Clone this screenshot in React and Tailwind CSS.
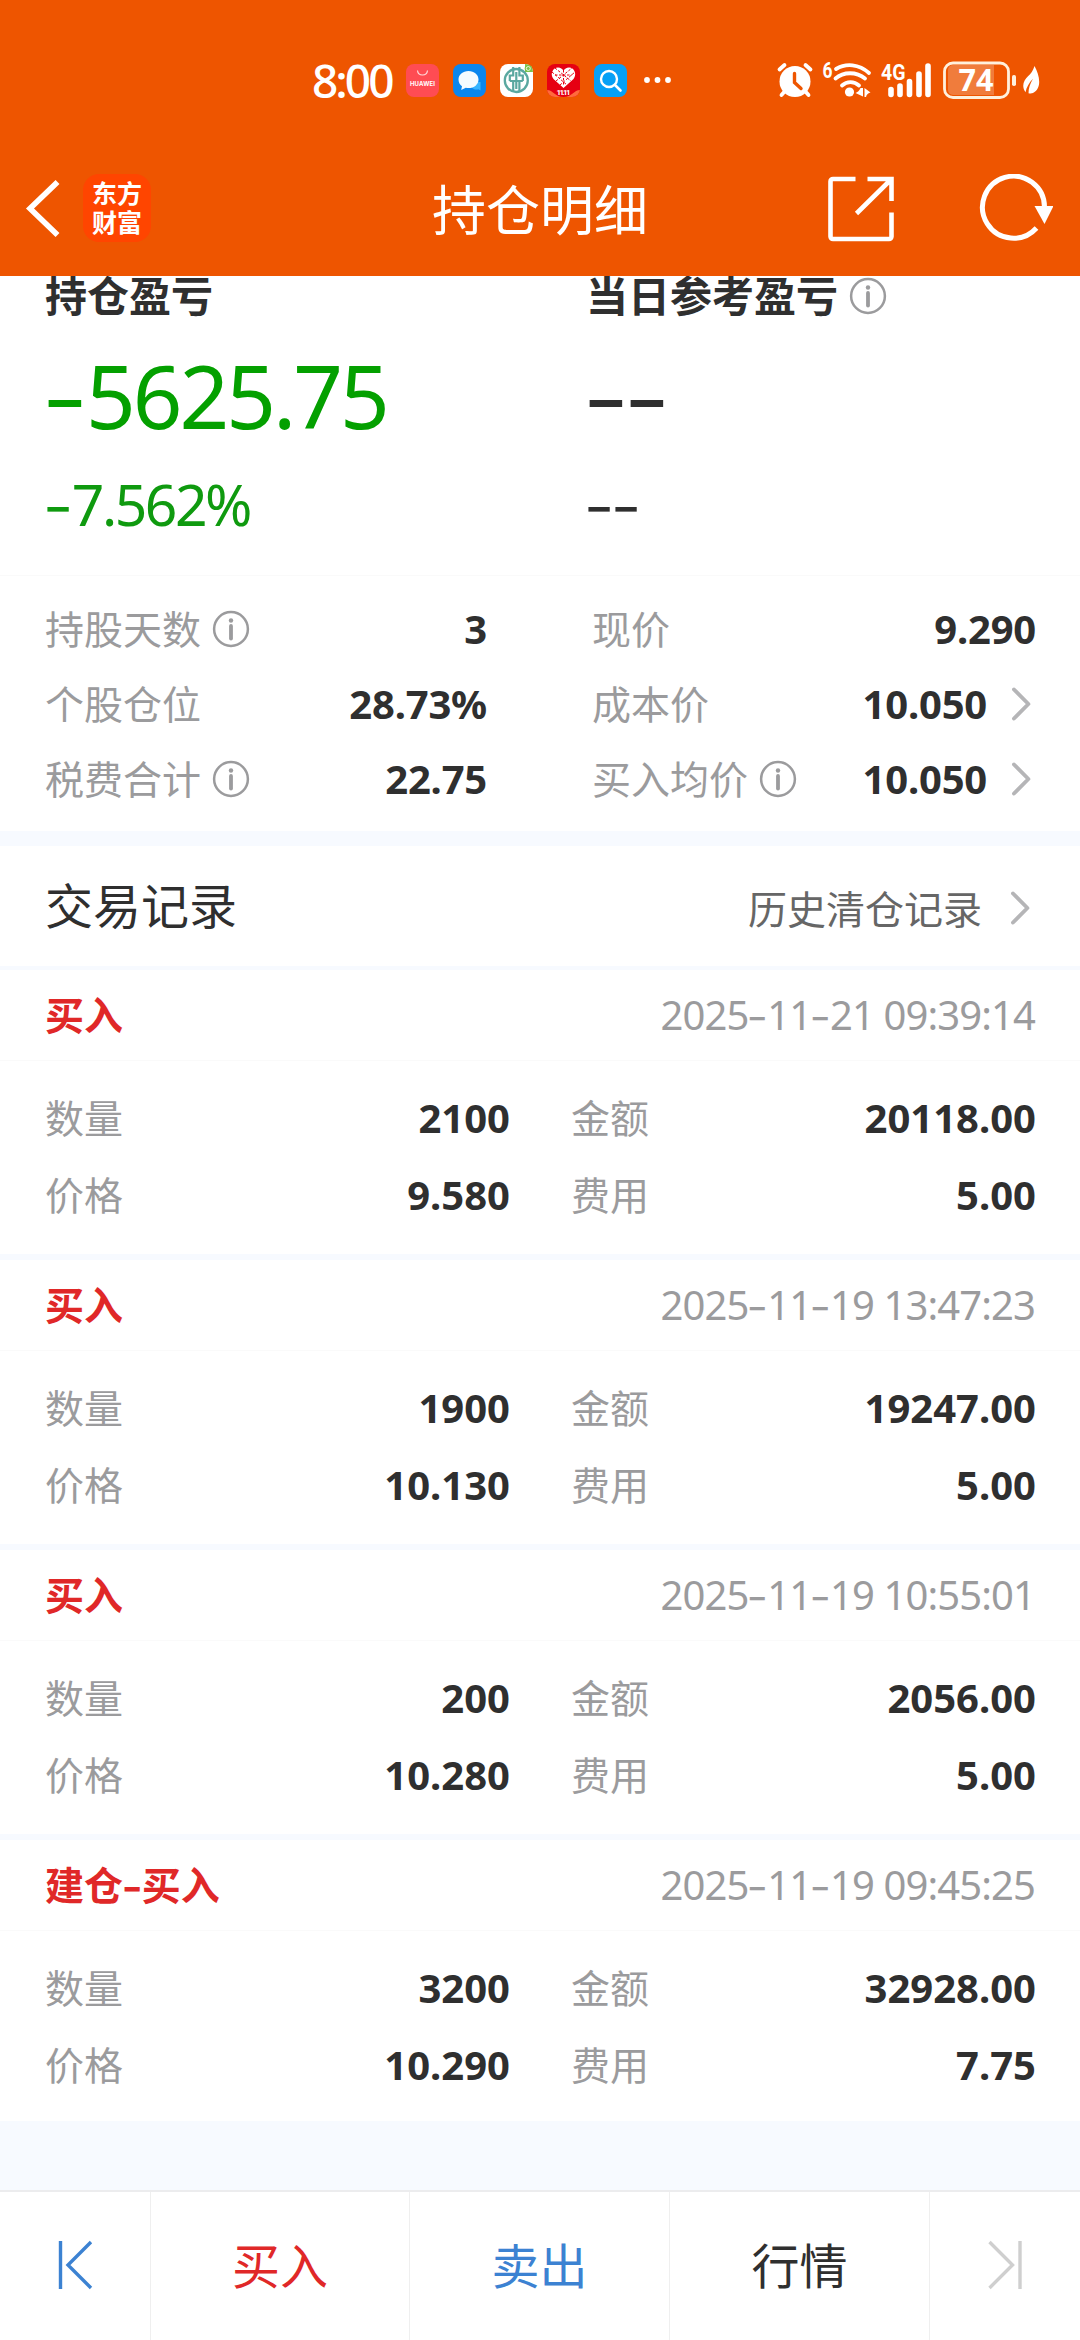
const CJK = "font-['Noto_Sans','Noto_Sans_CJK_SC',sans-serif]";

/* Numbers are set in Noto Sans; dashes use the wider Inter hyphen. */
function Num({ children }) {
  return children.split(/(-)/).filter(Boolean).map((part, i) =>
    part === "-" ? (
      <span key={i} className="inline-block translate-y-[0.02em] scale-x-[1.17] tracking-[0.01em] font-['Inter',sans-serif]">-</span>
    ) : (
      <span key={i}>{part}</span>
    )
  );
}

function InfoIcon() {
  return (
    <svg className="size-[38px] shrink-0" viewBox="0 0 38 38" fill="none">
      <circle cx="19" cy="19" r="16.900" stroke="#9b9b9d" strokeWidth="2.500" />
      <circle cx="19" cy="10.500" r="2.200" fill="#9b9b9d" />
      <path d="M19 16v12.500" stroke="#9b9b9d" strokeWidth="3.800" strokeLinecap="round" />
    </svg>
  );
}

function Chevron() {
  return (
    <svg className="h-[36px] w-[22px] shrink-0" viewBox="0 0 22 36" fill="none">
      <path d="M4 3.500 18.400 18 4 32.500" stroke="#b5b5b7" strokeWidth="3.900" strokeLinecap="round" strokeLinejoin="round" />
    </svg>
  );
}

function StatusBar() {
  return (
    <div className="flex h-[160px] items-center text-white">
      <div className="ml-[312px] w-[85px] text-[46px] leading-none font-medium tracking-[-3px] whitespace-nowrap font-['Noto_Sans',sans-serif]">8:00</div>
      <div className="ml-[9px] flex items-center gap-[14px]">
        <svg className="size-[33px]" viewBox="0 0 33 33">
          <rect width="33" height="33" rx="8" fill="#ff4c53" />
          <path d="M11.500 6.500c.6 6 9.400 6 10 0" fill="none" stroke="#ffd9da" strokeWidth="1.200" />
          <text x="16.500" y="21.500" textAnchor="middle" fontSize="6" fontWeight="700" fill="#fff" fontFamily="Inter, sans-serif" textLength="25">HUAWEI</text>
        </svg>
        <svg className="size-[33px]" viewBox="0 0 33 33">
          <rect width="33" height="33" rx="8" fill="#0a86ee" />
          <path d="M20 18h7.500v8.500l-2-1.200c-3 .8-6-.3-7-2.300z" fill="#36b4ff" />
          <path d="M15.500 7C9.800 7 5.500 10.600 5.500 15.500c0 3 1.400 5.300 3.500 6.800l-.8 3.700 4.600-2.200c.9.200 1.800.3 2.700.3 5.700 0 10-3.700 10-8.600S21.200 7 15.500 7z" fill="#f4fbff" />
        </svg>
        <svg className="size-[33px]" viewBox="0 0 33 33">
          <rect width="33" height="33" rx="8" fill="#fff" />
          <path d="M25 0a8 8 0 0 1 8 8H25z" fill="#7cc24a" />
          <circle cx="28.300" cy="4.500" r="3.600" fill="#7cc24a" />
          <circle cx="28.300" cy="4.500" r="2" fill="none" stroke="#fff" strokeWidth=".8" />
          <circle cx="16.300" cy="16.500" r="11.500" fill="none" stroke="#5aa8a0" strokeWidth="2.300" />
          <path d="M13.200 3v8.500h-3.400V17M19.400 3v8.500h3.400V17M9.800 17h13M13.200 17v10M19.400 17v10M16.300 8v17" fill="none" stroke="#5aa8a0" strokeWidth="2.200" />
        </svg>
        <svg className="size-[33px]" viewBox="0 0 33 33">
          <clipPath id="heartTile"><rect width="33" height="33" rx="8" /></clipPath>
          <g clipPath="url(#heartTile)">
            <rect width="33" height="33" fill="#e60012" />
            <path d="M0 26c6 0 8 7 16.500 7S27 26 33 26v7H0z" fill="#ff6a3c" />
            <path d="M16.500 24 6.500 15C2.500 10 6 3.500 11 3.500c2.500 0 4.500 1.500 5.500 3 1-1.500 3-3 5.500-3 5 0 8.500 6.500 4.500 11.500z" fill="#fff" />
            <path d="m5 8 15 13M8 4l16 13M13 21 28 8M9 17 25 4M16.500 6v16M8 11h17" stroke="#e60012" strokeWidth="1" strokeDasharray="2.500 1.500" />
            <text x="16.500" y="31" textAnchor="middle" fontSize="8" fontWeight="700" fill="#fff" fontFamily="Roboto, sans-serif" textLength="14">11.11</text>
          </g>
        </svg>
        <svg className="size-[33px]" viewBox="0 0 33 33" fill="none">
          <rect width="33" height="33" rx="8" fill="#06a0f6" />
          <circle cx="15" cy="15" r="8" stroke="#fff" strokeWidth="2.400" />
          <path d="m21 21 5.500 5.500" stroke="#fff" strokeWidth="2.600" strokeLinecap="round" />
        </svg>
      </div>
      <svg className="ml-[16px] h-[8px] w-[30px]" viewBox="0 0 30 8" fill="#fff">
        <circle cx="4" cy="4" r="2.900" />
        <circle cx="14.500" cy="4" r="2.900" />
        <circle cx="25" cy="4" r="2.900" />
      </svg>
      <svg className="mr-[40px] ml-auto h-[40px] w-[264px]" viewBox="0 0 264 40" fill="none">
        {/* alarm clock */}
        <g stroke="#fff" strokeLinecap="round">
          <circle cx="19" cy="21.500" r="15.500" fill="#fff" stroke="none" />
          <path d="M3.500 9.500 8.500 5M34.500 9.500l-5-4.500" strokeWidth="3.800" />
          <path d="m9 31-3.500 4M29 31l3.500 4" strokeWidth="3.800" />
          <path d="M18.500 13.500v9l6.500 6" stroke="#ee5500" strokeWidth="3.400" />
        </g>
        {/* wifi */}
        <text x="46.500" y="18" fontSize="22" fontWeight="700" fill="#fff" fontFamily="Roboto, sans-serif" textLength="10" lengthAdjust="spacingAndGlyphs">6</text>
        <g stroke="#fff" strokeWidth="3.800" strokeLinecap="round">
          <path d="M60 9c10-6 23-5 33 4" />
          <path d="M59.500 18.500c8-7 21-7 29.500 0" />
          <path d="M66 25.500c5-4.500 12-4.500 17 0" />
        </g>
        <circle cx="73.500" cy="32" r="4.600" fill="#fff" />
        <path d="M87 28v8.500L79.500 33c2-.5 4-2.500 5-5zM88.500 37v-9l6 4.500c-2 .5-4 2-4.500 4.500z" fill="#fff" />
        {/* cellular */}
        <text x="105" y="19.500" fontSize="22" fontWeight="700" fill="#fff" fontFamily="Roboto, sans-serif" textLength="24.500" lengthAdjust="spacingAndGlyphs">4G</text>
        <path d="M115 29.500v5M124 26v8.500M133.500 21.500v13M143 14v20.500M152 6v28.500" stroke="#fff" strokeWidth="5.600" strokeLinecap="round" />
        {/* battery */}
        <path d="M177 5h41v30h-41a5 5 0 0 1-5-5V10a5 5 0 0 1 5-5z" fill="#f07c3c" />
        <rect x="168.500" y="3" width="64" height="34.500" rx="8.500" stroke="#fff0dc" strokeWidth="2.800" />
        <rect x="236" y="15" width="4" height="11" rx="1.800" fill="#fff0dc" />
        <text x="200" y="31" textAnchor="middle" fontSize="31" fontWeight="700" fill="#fff" fontFamily="'Noto Sans', sans-serif" textLength="35" lengthAdjust="spacingAndGlyphs">74</text>
        <path d="M258.500 6c5 9 8 22-1.500 27-1.500.6-3 .6-4.500.2 0-5 1.500-9.500 4.500-14.500-4 4-6.500 8.500-7.500 13.500-4.500-6-1.500-12.500 2.500-16 3-2.700 5-5.200 6.500-10.200z" fill="#fff" />
      </svg>
    </div>
  );
}

function NavBar() {
  return (
    <div className="grid h-[116px] grid-cols-[1fr_auto_1fr] items-start text-white">
      <div className="flex items-start pt-[14px]">
        <svg className="ml-[22px] h-[68px] w-[42px]" viewBox="0 0 42 68" fill="none">
          <path d="M33.500 10 8 34.500 33.500 59" stroke="#fff" strokeWidth="5.600" strokeLinecap="square" />
        </svg>
        <div className="ml-[19px] h-[68px] w-[68px] rounded-[16px] bg-[#ff4500] pt-[4px] text-center text-[25px] leading-[29px] font-bold font-['Noto_Sans_CJK_SC',sans-serif]">
          东方<br />财富
        </div>
      </div>
      <h1 className="pt-[18px] text-[54px] leading-[60px] font-normal font-['Noto_Sans_CJK_SC',sans-serif]">持仓明细</h1>
      <div className="flex items-start justify-end pt-[14px]">
        <svg className="h-[68px] w-[66px]" viewBox="0 0 66 68" fill="none" stroke="#fff" strokeWidth="4.600">
          <path d="M27.500 5H5a2.500 2.500 0 0 0-2.500 2.500v55A2.500 2.500 0 0 0 5 65h56a2.500 2.500 0 0 0 2.500-2.500V38.500M39.500 5h24v22M62 6.500 28.500 39.500" />
        </svg>
        <svg className="mr-[27px] ml-[83px] h-[68px] w-[76px]" viewBox="0 0 76 68" fill="none">
          <path d="M59.500 54A31 31 0 1 1 67.500 33" stroke="#fff" strokeWidth="5" />
          <path d="M57.500 32h19L67.500 50z" fill="#fff" />
        </svg>
      </div>
    </div>
  );
}

function Stat({ label, info, value, arrow }) {
  return (
    <div className="flex h-[75px] items-center">
      <span className="text-[39px] text-[#9b9b9d]">{label}</span>
      {info && <span className="ml-[11px]"><InfoIcon /></span>}
      <span className="ml-auto text-[40px] font-bold tracking-[-0.2px] text-[#2f2f2f]">{value}</span>
      {arrow && <span className="mr-[4px] ml-[23px]"><Chevron /></span>}
    </div>
  );
}

function Field({ label, value }) {
  return (
    <div className="flex h-[77px] items-center">
      <span className="text-[39px] text-[#9b9b9d]">{label}</span>
      <span className="ml-auto text-[40px] font-bold text-[#2f2f2f]">{value}</span>
    </div>
  );
}

function Trade({ type, time, qty, amount, price, fee }) {
  return (
    <article className="h-[290px] border-b-6 border-[#f7faff] bg-white">
      <div className="flex h-[91px] items-center justify-between border-b border-[#fafafa] pr-[45px] pb-[1px] pl-[45px]">
        <span className="text-[39px] font-bold text-[#e02828]">
          <Num>{type}</Num>
        </span>
        <time className="mt-[2px] text-[40px] tracking-[-0.9px] text-[#9b9b9d]"><Num>{time}</Num></time>
      </div>
      <div className="grid grid-cols-[465px_1fr] gap-x-[61px] pt-[18px] pr-[44px] pl-[45px]">
        <Field label="数量" value={qty} />
        <Field label="金额" value={amount} />
        <Field label="价格" value={price} />
        <Field label="费用" value={fee} />
      </div>
    </article>
  );
}

const trades = [
  { type: "买入", time: "2025-11-21 09:39:14", qty: "2100", amount: "20118.00", price: "9.580", fee: "5.00" },
  { type: "买入", time: "2025-11-19 13:47:23", qty: "1900", amount: "19247.00", price: "10.130", fee: "5.00" },
  { type: "买入", time: "2025-11-19 10:55:01", qty: "200", amount: "2056.00", price: "10.280", fee: "5.00" },
  { type: "建仓-买入", time: "2025-11-19 09:45:25", qty: "3200", amount: "32928.00", price: "10.290", fee: "7.75" },
];

export default function App() {
  return (
    <div className={`flex h-[2340px] w-[1080px] flex-col overflow-hidden bg-[#f7faff] leading-none whitespace-nowrap ${CJK}`}>
      <header className="h-[276px] shrink-0 bg-[#ee5500]">
        <StatusBar />
        <NavBar />
      </header>

      <section className="h-[555px] shrink-0 overflow-hidden bg-white">
        <div className="grid h-[300px] grid-cols-[541px_1fr] border-b border-[#fafafa] pl-[45px]">
          <div>
            <div className="mt-[-1px] h-[42px] text-[42px] font-bold text-[#2f2f2f]">持仓盈亏</div>
            <div className="mt-[33px] h-[90px] text-[87px] leading-[90px] tracking-[-3px] text-[#04a000]"><Num>-5625.75</Num></div>
            <div className="mt-[34px] h-[60px] text-[57px] leading-[60px] tracking-[-2.5px] text-[#0f9a0f]"><Num>-7.562%</Num></div>
          </div>
          <div>
            <div className="mt-[-1px] flex h-[42px] items-center text-[42px] font-bold text-[#2f2f2f]">
              当日参考盈亏
              <span className="ml-[11px]"><InfoIcon /></span>
            </div>
            <div className="mt-[33px] h-[90px] text-[87px] leading-[90px] text-[#2f2f2f]"><Num>--</Num></div>
            <div className="mt-[34px] h-[60px] text-[57px] leading-[60px] text-[#2f2f2f]"><Num>--</Num></div>
          </div>
        </div>
        <div className="grid grid-cols-[442px_1fr] gap-x-[105px] pt-[15px] pr-[44px] pl-[45px]">
          <Stat label="持股天数" info value="3" />
          <Stat label="现价" value="9.290" />
          <Stat label="个股仓位" value="28.73%" />
          <Stat label="成本价" value="10.050" arrow />
          <Stat label="税费合计" info value="22.75" />
          <Stat label="买入均价" info value="10.050" arrow />
        </div>
      </section>

      <section className="mt-[15px] flex h-[120px] shrink-0 items-center bg-white pr-[49px] pl-[45px]">
        <h2 className="text-[48px] text-[#2f2f2f]">交易记录</h2>
        <span className="mt-[4px] ml-auto text-[39px] text-[#666]">历史清仓记录</span>
        <span className="mt-[4px] ml-[27px]"><Chevron /></span>
      </section>

      <section className="mt-[4px] h-[1151px] shrink-0 overflow-hidden">
        {trades.map((t) => <Trade key={t.time} {...t} />)}
      </section>

      <footer className="mt-auto grid h-[150px] shrink-0 grid-cols-[151px_259px_260px_260px_150px] border-t-2 border-[#ececee] bg-white text-[48px]">
        <button className="flex items-center justify-center border-r border-[#efefef] pb-[3px]">
          <svg className="h-[50px] w-[38px]" viewBox="0 0 38 50" fill="none" stroke="#3c82d2" strokeWidth="3.400">
            <path d="M4.500 1v48M35 2 12 25l23 23" />
          </svg>
        </button>
        <button className="flex items-center justify-center border-r border-[#efefef] text-[#e02828]">买入</button>
        <button className="flex items-center justify-center border-r border-[#efefef] text-[#3c82d2]">卖出</button>
        <button className="flex items-center justify-center border-r border-[#efefef] text-[#2f2f2f]">行情</button>
        <button className="flex items-center justify-center pb-[3px]">
          <svg className="h-[50px] w-[38px]" viewBox="0 0 38 50" fill="none" stroke="#cfcfcf" strokeWidth="3.400">
            <path d="M34 1v48M3.500 2l23 23-23 23" />
          </svg>
        </button>
      </footer>
    </div>
  );
}
